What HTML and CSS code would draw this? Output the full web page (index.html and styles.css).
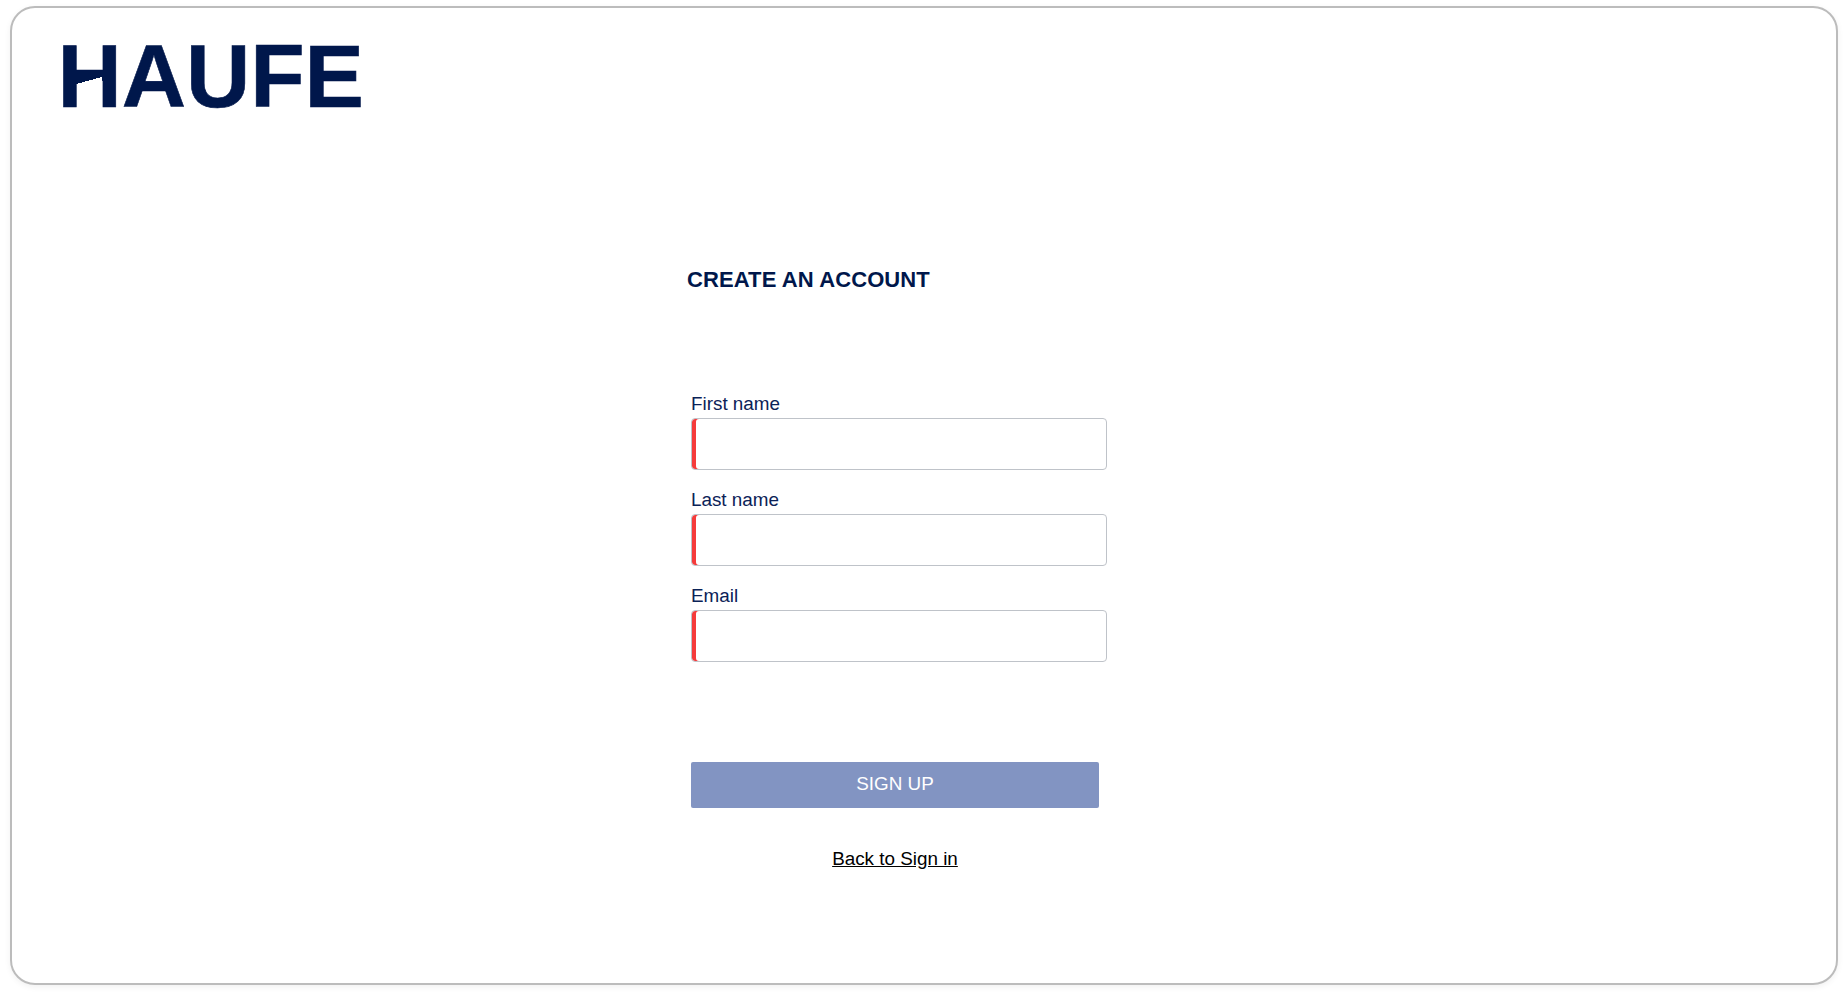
FILE: index.html
```html
<!DOCTYPE html>
<html lang="en">
<head>
<meta charset="utf-8">
<title>Create an account</title>
<link rel="stylesheet" href="styles.css">
</head>
<body>
<main class="card">
  <header class="logo"><span class="logo-text">HAUFE</span></header>
  <section class="content">
    <h1 class="title">CREATE AN ACCOUNT</h1>
    <form class="form">
      <div class="field">
        <label class="label" for="first">First name</label>
        <input class="input" id="first" type="text">
      </div>
      <div class="field">
        <label class="label" for="last">Last name</label>
        <input class="input" id="last" type="text">
      </div>
      <div class="field">
        <label class="label" for="email">Email</label>
        <input class="input" id="email" type="email">
      </div>
      <button class="submit" type="button">SIGN UP</button>
      <a class="back" href="#">Back to Sign in</a>
    </form>
  </section>
</main>
</body>
</html>
```
FILE: styles.css
```css
* { box-sizing: border-box; }
html, body { margin: 0; height: 1000px; background: #fff; overflow: hidden; }
body {
  padding: 6px 10px 15px 10px;
  font-family: "Liberation Sans", Arial, sans-serif;
  color: #001a4d;
}
.card {
  height: 979px;
  border: 2px solid #bcbcbc;
  border-radius: 25px;
  background: #fff;
  box-shadow: 0 2px 6px rgba(0, 0, 0, 0.06);
  padding: 0 0 0 45.4px;
}
.logo { height: 125px; padding-top: 18px; margin-bottom: 1px; }
.logo-text {
  position: relative;
  display: inline-block;
  font-size: 89px;
  line-height: 100px;
  font-weight: 700;
  -webkit-text-stroke: 0.6px #00174b;
  color: #00174b;
}
.logo-text::after {
  content: "";
  position: absolute;
  left: 19px;
  top: 51px;
  width: 26px;
  height: 7px;
  background: linear-gradient(to bottom right, #00174b 50%, #fff 50%);
}
.content { padding-left: 629.6px; }
.title {
  margin: 0;
  padding-top: 133px;
  font-size: 22px;
  line-height: 26px;
  letter-spacing: 0.1px;
  font-weight: 700;
  color: #00174b;
}
.form {
  width: 416px;
  margin-left: 4px;
  padding-top: 100px;
  display: flex;
  flex-direction: column;
}
.field { display: flex; flex-direction: column; height: 96px; }
.label { font-size: 18.85px; line-height: 22.5px; height: 24.8px; color: #0b2257; }
.input {
  width: 416px;
  height: 52px;
  border: 1px solid #bfc3c9;
  border-radius: 4px;
  background: #fff;
  box-shadow: inset 4px 0 0 #f53b3b;
  outline: 0;
  padding: 0 10px;
}
.submit {
  width: 408px;
  height: 46px;
  margin-top: 81px;
  border: 0;
  border-radius: 2px;
  background: #8294c2;
  color: #fff;
  font-family: inherit;
  font-size: 18.85px;
  padding: 0 0 2px;
}
.back {
  width: 408px;
  margin-top: 39px;
  text-align: center;
  font-size: 18.85px;
  line-height: 24px;
  color: #000;
}
```
